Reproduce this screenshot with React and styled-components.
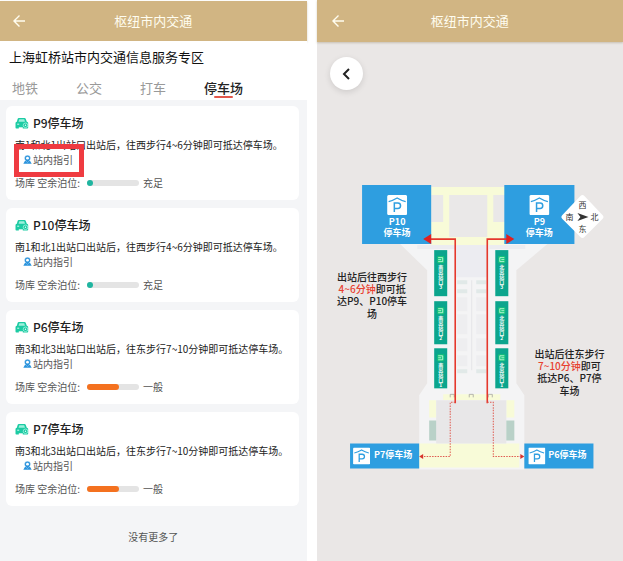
import React, { useState } from 'react';
import styled, { createGlobalStyle } from 'styled-components';

const tabs = ['地铁', '公交', '打车', '停车场'];

const parkings = [
  {
    name: 'P9停车场',
    text: '南1和北1出站口出站后，往西步行4~6分钟即可抵达停车场。',
    used: 12,
    color: '#1fb5a0',
    status: '充足',
    marked: true,
  },
  {
    name: 'P10停车场',
    text: '南1和北1出站口出站后，往西步行4~6分钟即可抵达停车场。',
    used: 12,
    color: '#1fb5a0',
    status: '充足',
  },
  {
    name: 'P6停车场',
    text: '南3和北3出站口出站后，往东步行7~10分钟即可抵达停车场。',
    used: 62,
    color: '#f4711f',
    status: '一般',
  },
  {
    name: 'P7停车场',
    text: '南3和北3出站口出站后，往东步行7~10分钟即可抵达停车场。',
    used: 62,
    color: '#f4711f',
    status: '一般',
  },
];

const exits = [
  { y: 70, height: 46, number: 3 },
  { y: 121, height: 43, number: 2 },
  { y: 168, height: 40, number: 1 },
];

const ArrowIcon = () => (
  <svg width='12' height='12' viewBox='0 0 12 12' fill='none' stroke='currentColor' strokeWidth='1.4'>
    <path d='M6.5 0.6L1 6l5.5 5.4M1 6h11' />
  </svg>
);

const CarIcon = () => (
  <svg width='14' height='12' viewBox='0 0 14 12'>
    <path
      d='M3.8 1h5.800c.5 0 .9.300 1.100.8l1.100 2.900c.9.100 1.400.7 1.400 1.500v4.300c0 .6-.3.900-.9.900H1.300c-.5 0-.8-.3-.8-.9V6.400c0-.9.500-1.500 1.300-1.700l.9-2.900c.2-.5.600-.8 1.100-.8z'
      fill='#1ccba3'
    />
    <path d='M4.300 2.300h4.900l.8 2.400H3.500z' fill='#9df0dc' />
    <path d='M2.200 7.200h2' stroke='#e6fff8' strokeWidth='0.900' />
    <path d='M3.800 10.300h4v1.700h-4z' fill='#fff' />
    <circle cx='10.500' cy='8.300' r='2.300' fill='#1ccba3' stroke='#b9f7e8' strokeWidth='0.700' />
    <circle cx='10.500' cy='8.300' r='0.700' fill='#e6fff8' />
  </svg>
);

const PinIcon = () => (
  <svg width='9' height='9' viewBox='0 0 9 9'>
    <path d='M2 5.800L0.300 8.700h8.400L7 5.800' fill='#2a93dc' />
    <path
      d='M4.500 0.200a3 3 0 0 1 3 3c0 1.700-1.600 3-3 4.300C3 6.200 1.500 4.900 1.500 3.200a3 3 0 0 1 3-3z'
      fill='#2a93dc'
      stroke='#fff'
      strokeWidth='0.300'
    />
    <circle cx='4.500' cy='3.200' r='1.400' fill='#fff' />
  </svg>
);

const ParkingSign = ({ x, y, size }) => (
  <svg x={x} y={y} width={size} height={size} viewBox='0 0 20 20'>
    <rect width='20' height='20' rx='1.500' fill='#fff' />
    <path d='M1.500 6.500Q6 5.500 10 3Q14 5.500 18.500 6.500' fill='none' stroke='#2e9ee0' strokeWidth='1.300' />
    <path d='M7.200 17V8h3.500a2.700 2.700 0 0 1 0 5.400H7.200' fill='none' stroke='#2e9ee0' strokeWidth='1.500' />
  </svg>
);

const ExitSign = ({ x, y, height, side, number }) => (
  <g>
    <rect x={x} y={y} width='13' height={height} fill='#0ba58d' />
    <rect x={x + 3} y={y + 6} width='7' height='7' rx='1' fill='#15c478' />
    <path
      d={
        side === '南'
          ? `M${x + 4} ${y + 7.5}h4.500v4h-4.500M${x + 4} ${y + 9.5}h3`
          : `M${x + 9} ${y + 7.5}h-4.500v4h4.500M${x + 9} ${y + 9.5}h-3`
      }
      fill='none'
      stroke='#d8ffe9'
      strokeWidth='0.800'
    />
    <ExitText x={x + 6.5} y={y + 14}>
      {`${side}出站口${number}`}
    </ExitText>
  </g>
);

const StationMap = () => (
  <MapSvg viewBox='0 0 306 290' role='img' aria-label='停车场站内指引'>
    {/* station building */}
    <path
      d='M83 64H230L199 90V203L207 215V289H102V215L110 203V90Z'
      fill='#f4f4f5'
    />
    <path d='M114 7H189V65H114Z' fill='#f8fbd8' />
    <path d='M114 15h12v27h-12zM132 15h38v42h-38zM176 15h12v27h-12z' fill='#eae8e8' />
    <path d='M100 65h38v4h-38zM172 65h36v4h-36z' fill='#ececf0' />
    <path d='M139 65h31v32h-31z' fill='#ececf1' />
    <path
      d='M140 100h10v4h-10zM159 100h10v4h-10zM140 109h10v4h-10zM159 109h10v4h-10zM140 189h10v4h-10zM159 189h10v4h-10z'
      fill='#e1e9e8'
    />
    <path
      d='M140 117h10v14h-10zM159 117h10v14h-10zM140 134h10v20h-10zM159 134h10v20h-10zM140 158h10v13h-10zM159 158h10v13h-10zM140 175h10v11h-10zM159 175h10v11h-10z'
      fill='#eeeef0'
    />
    <path d='M154.500 100V190' stroke='#e5e5e7' strokeWidth='1' />

    {/* lower hall */}
    <path d='M126 214h57v6h-57zM112 220h7v17h-7zM189 220h8v17h-8zM102 263h100v24H102z' fill='#f8fbd8' />
    <path d='M119 220h70v43h-70z' fill='#e8e7e8' />
    <path d='M112 240h7v20h-7zM189 240h8v20h-8z' fill='#b9d1c8' />
    <path
      d='M133 217v-3h4v3M152 217v-3h4v3M171 217v-3h4v3'
      fill='none'
      stroke='#a5a5a0'
      strokeWidth='0.800'
    />

    {exits.map((exit) => (
      <g key={exit.number}>
        <ExitSign x={117} side='南' {...exit} />
        <ExitSign x={178} side='北' {...exit} />
      </g>
    ))}

    {/* car parks */}
    <path d='M45 5h69v59H45zM187 5h70v59h-70zM33 263h69v25H33zM207 263h69v25h-69z' fill='#2e9ee0' />
    <ParkingSign x={70} y={15} size={20} />
    <ParkingSign x={212} y={15} size={20} />
    <ParkingSign x={36} y={267} size={17} />
    <ParkingSign x={211} y={267} size={17} />
    <ParkText x='80' y='45'>P10</ParkText>
    <ParkText x='80' y='56'>停车场</ParkText>
    <ParkText x='222' y='45'>P9</ParkText>
    <ParkText x='222' y='56'>停车场</ParkText>
    <ParkText x='76' y='278'>P7停车场</ParkText>
    <ParkText x='250' y='278'>P6停车场</ParkText>

    {/* walking routes */}
    <path d='M112 59H138V223M192 59H170V223' fill='none' stroke='#e5382c' strokeWidth='1.600' />
    <path d='M106 59l8-5v10zM197 59l-8-5v10z' fill='#e02020' />
    <path
      d='M138 222H133V276H106M170 222H176V276H203'
      fill='none'
      stroke='#df5a50'
      strokeWidth='1'
      strokeDasharray='1.500 1.200'
    />
    <path d='M102 276l4-2.500v5zM207 276l-4-2.500v5z' fill='#d8332b' />

    {/* compass */}
    <path d='M267 16l18 19q2 2 0 4l-18 18q-2 2-4 0l-18-18q-2-2 0-4l18-19q2-2 4 0z' fill='#fff' />
    <path d='M260 33l11 4-11 4 3-4z' fill='#333' />
    <CompassText x='265' y='28'>西</CompassText>
    <CompassText x='252' y='40'>南</CompassText>
    <CompassText x='277' y='40'>北</CompassText>
    <CompassText x='265' y='52'>东</CompassText>

    <NoteText y='101'>
      <tspan x='55'>出站后往西步行</tspan>
      <tspan x='55' dy='12'><Minutes>4~6分钟</Minutes>即可抵</tspan>
      <tspan x='55' dy='12'>达P9、P10停车</tspan>
      <tspan x='55' dy='13'>场</tspan>
    </NoteText>
    <NoteText y='178'>
      <tspan x='252'>出站后往东步行</tspan>
      <tspan x='252' dy='12'><Minutes>7~10分钟</Minutes>即可</tspan>
      <tspan x='252' dy='12'>抵达P6、P7停</tspan>
      <tspan x='252' dy='13'>车场</tspan>
    </NoteText>
  </MapSvg>
);

const ParkingCard = ({ name, text, used, color, status, marked }) => (
  <Card>
    <CardTitle>
      <CarIcon />
      {name}
    </CardTitle>
    <CardText>{text}</CardText>
    <GuideLink href='#guide'>
      <PinIcon />
      站内指引
      {marked && <Highlight />}
    </GuideLink>
    <Spaces>
      <span>场库 空余泊位:</span>
      <Bar role='img' aria-label={status}>
        <BarFill $color={color} style={{ width: `${used}%` }} />
      </Bar>
      <span>{status}</span>
    </Spaces>
  </Card>
);

const App = () => {
  const [active, setActive] = useState('停车场');

  return (
    <>
      <GlobalStyle />
      <Page>
        <ListScreen>
          <Header>
            <IconButton aria-label='返回'>
              <ArrowIcon />
            </IconButton>
            <HeaderTitle>枢纽市内交通</HeaderTitle>
          </Header>
          <Top>
            <Heading>上海虹桥站市内交通信息服务专区</Heading>
            <Tabs>
              {tabs.map((tab) => (
                <Tab key={tab} $active={tab === active} onClick={() => setActive(tab)}>
                  {tab}
                </Tab>
              ))}
            </Tabs>
          </Top>
          <Cards>
            {parkings.map((parking) => (
              <ParkingCard key={parking.name} {...parking} />
            ))}
          </Cards>
          <NoMore>没有更多了</NoMore>
        </ListScreen>
        <MapScreen>
          <Header $tall>
            <IconButton aria-label='返回'>
              <ArrowIcon />
            </IconButton>
            <HeaderTitle>枢纽市内交通</HeaderTitle>
          </Header>
          <RoundButton aria-label='后退'>
            <svg width='8' height='12' viewBox='0 0 8 12' fill='none' stroke='#222' strokeWidth='2'>
              <path d='M7 1L2 6l5 5' />
            </svg>
          </RoundButton>
          <StationMap />
        </MapScreen>
      </Page>
    </>
  );
};

const GlobalStyle = createGlobalStyle`
  * {
    box-sizing: border-box;
  }
  body {
    margin: 0;
    background: #fff;
    color: #222;
    font-family: 'Noto Sans CJK SC', sans-serif;
    font-size: 10px;
  }
  button {
    border: none;
    padding: 0;
    background: none;
    color: inherit;
    font-family: inherit;
    cursor: pointer;
  }
`;

const Page = styled.div`
  display: grid;
  grid-template-columns: 1fr 1fr;
  gap: 10px;
  min-height: 100vh;
`;

const ListScreen = styled.main`
  margin-top: 1px;
  background: #f4f5f7;
`;

const MapScreen = styled.section`
  background: #eae7e6;
`;

const Header = styled.header`
  display: grid;
  grid-template-columns: ${(props) => (props.$tall ? '42px 1fr 42px' : '38px 1fr 38px')};
  align-items: center;
  height: ${(props) => (props.$tall ? '42px' : '40px')};
  background: #d1b583;
  color: #fffdf0;
  box-shadow: 0 1px 2px rgba(120, 100, 60, 0.3);
`;

const IconButton = styled.button`
  display: flex;
  justify-content: center;
  padding: 10px;
`;

const HeaderTitle = styled.h2`
  margin: 0;
  font-size: 13px;
  font-weight: 400;
  line-height: 20px;
  text-align: center;
`;

const Top = styled.div`
  padding: 6px 9px 0;
  background: #fff;
`;

const Heading = styled.h1`
  margin: 0;
  color: #111;
  font-size: 13px;
  font-weight: 400;
  line-height: 20px;
`;

const Tabs = styled.nav`
  display: flex;
  gap: 38px;
  padding: 9px 3px 0;
`;

const Tab = styled.button`
  position: relative;
  height: 24px;
  color: ${(props) => (props.$active ? '#222' : '#999')};
  font-size: 13px;
  font-weight: ${(props) => (props.$active ? 500 : 400)};
  line-height: 24px;

  &::after {
    content: '';
    display: ${(props) => (props.$active ? 'block' : 'none')};
    position: absolute;
    left: 10px;
    right: 10px;
    bottom: 2px;
    height: 2px;
    border-radius: 1px;
    background: #e2574c;
  }
`;

const Cards = styled.div`
  display: flex;
  flex-direction: column;
  gap: 8px;
  padding: 6px 8px 0 6px;
`;

const Card = styled.article`
  padding: 8px 9px 10px;
  border-radius: 6px;
  background: #fff;
`;

const CardTitle = styled.h3`
  display: flex;
  align-items: center;
  gap: 4px;
  margin: 0 0 5px;
  font-size: 12px;
  font-weight: 500;
  line-height: 18px;
`;

const CardText = styled.p`
  margin: 0;
  line-height: 15px;
  white-space: nowrap;
`;

const GuideLink = styled.a`
  display: inline-flex;
  align-items: center;
  gap: 1px;
  position: relative;
  margin-left: 8px;
  color: #555;
  line-height: 15px;
  text-decoration: none;
`;

const Highlight = styled.span`
  position: absolute;
  inset: -8px -11px -10px -9px;
  border: 5px solid #ef3b41;
`;

const Spaces = styled.div`
  display: flex;
  align-items: center;
  gap: 4px;
  margin-top: 8px;
  color: #555;
  line-height: 15px;
`;

const Bar = styled.div`
  width: 52px;
  height: 6px;
  margin-left: 3px;
  border-radius: 3px;
  background: #e4e4e4;
`;

const BarFill = styled.div`
  height: 6px;
  border-radius: 3px;
  background: ${(props) => props.$color};
`;

const NoMore = styled.p`
  margin: 23px 0 0;
  color: #555;
  line-height: 15px;
  text-align: center;
`;

const RoundButton = styled.button`
  display: flex;
  align-items: center;
  justify-content: center;
  width: 33px;
  height: 33px;
  margin: 15px 0 0 13px;
  border-radius: 50%;
  background: #fff;
  box-shadow: 0 2px 6px rgba(0, 0, 0, 0.12);
`;

const MapSvg = styled.svg`
  display: block;
  width: 100%;
  margin-top: 90px;
`;

const ParkText = styled.text`
  fill: #fff;
  font-size: 9px;
  font-weight: 700;
  text-anchor: middle;
`;

const ExitText = styled.text`
  fill: #fff;
  font-size: 5px;
  font-weight: 700;
  writing-mode: vertical-rl;
  text-orientation: upright;
`;

const CompassText = styled.text`
  fill: #333;
  font-size: 8px;
  text-anchor: middle;
`;

const NoteText = styled.text`
  fill: #222;
  font-size: 10px;
  font-weight: 500;
  text-anchor: middle;
`;

const Minutes = styled.tspan`
  fill: #e8402f;
`;

export default App;
